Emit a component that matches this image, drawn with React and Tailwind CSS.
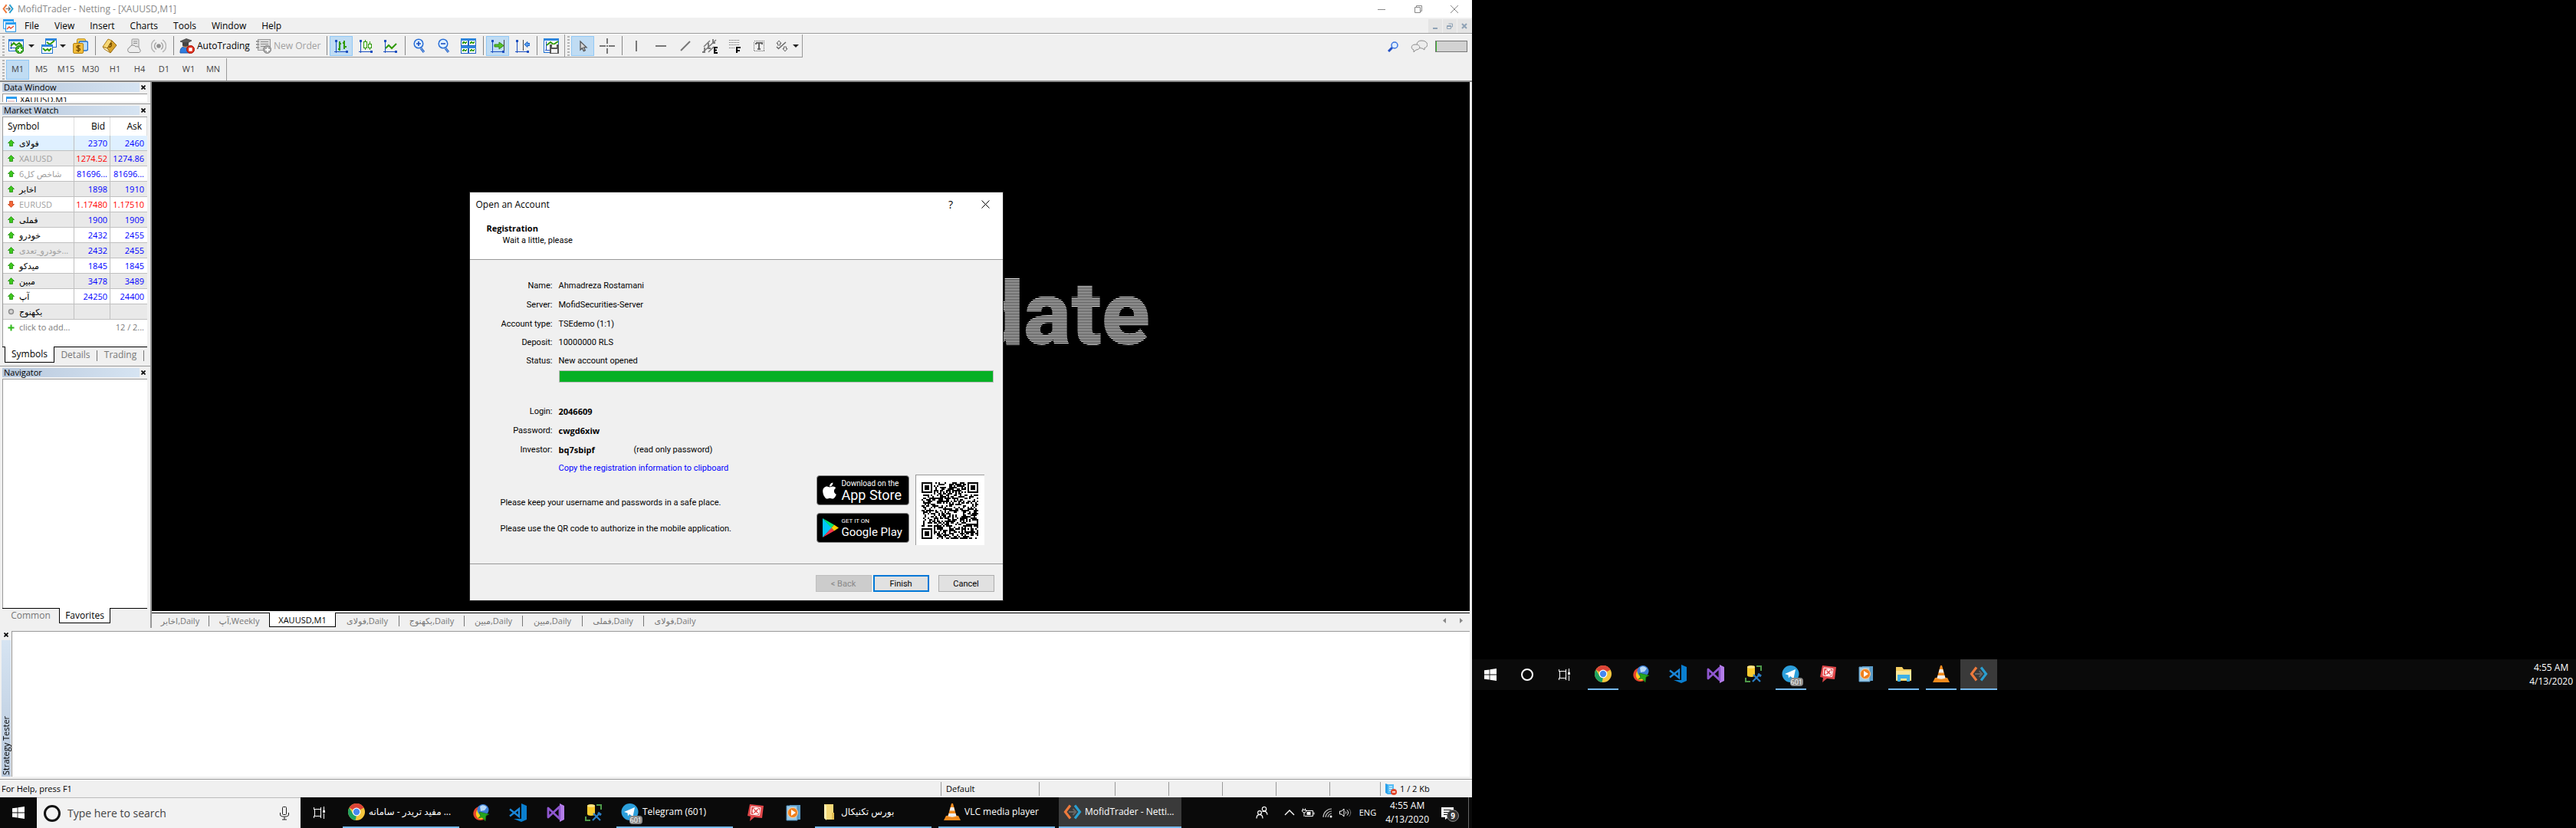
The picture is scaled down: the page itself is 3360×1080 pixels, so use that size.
import React from "react";
import { FaApple } from "react-icons/fa";

const UI = "font-['Open_Sans','DejaVu_Sans',sans-serif]";

/* ---------- toolbar icons (20 x 20) ---------- */
function Svg({ size = 20, box = 20, children, crisp = true }) {
  return (
    <svg width={size} height={size} viewBox={`0 0 ${box} ${box}`} fill="none" shapeRendering={crisp ? "crispEdges" : "auto"} className="shrink-0" aria-hidden="true">
      {children}
    </svg>
  );
}
const Axes = () => (
  <g>
    <path d="M3.5 2V19M1 17.5H19" stroke="#1c4fc0" />
    <path d="M2 2h3v3h-3zM16 16h3v3h-3z" fill="#1c4fc0" />
  </g>
);
const NewChart = () => (
  <Svg>
    <rect x="0.5" y="1" width="19" height="15" fill="#fff" stroke="#1c6fd0" />
    <path d="M1 1h19v3H1z" fill="#2f86dd" />
    <path d="M3.5 5v9M2 12.5h16" stroke="#1c4fc0" />
    <path d="M3 10l4-4 3 3 4-3 4 4" stroke="#2f9a00" strokeWidth="2" shapeRendering="auto" />
    <circle cx="14.5" cy="14.5" r="5.3" fill="#3fae2a" stroke="#1f7d12" shapeRendering="auto" />
    <path d="M14.5 11.5v6M11.5 14.5h6" stroke="#fff" strokeWidth="2" />
  </Svg>
);
const Windows = () => (
  <Svg>
    <rect x="5.5" y="0.5" width="14" height="11" fill="#fff" stroke="#1c6fd0" />
    <path d="M5 0h15v3H5z" fill="#2f86dd" />
    <path d="M7 5l4 3 6-5" stroke="#2f9a00" strokeWidth="2" shapeRendering="auto" />
    <rect x="0.5" y="8.5" width="14" height="11" fill="#fff" stroke="#1c6fd0" />
    <path d="M0 8h15v3H0z" fill="#2f86dd" />
    <path d="M2 13l3 3 3-2 2 2 3-3" stroke="#2f9a00" strokeWidth="2" shapeRendering="auto" />
  </Svg>
);
const Money = () => (
  <Svg crisp={false}>
    <rect x="5.5" y="0.8" width="11" height="9" rx="1.5" fill="#f5cf58" stroke="#b8860b" />
    <rect x="8" y="4" width="11.5" height="12" rx="2" fill="#bfe0fa" stroke="#1c6fd0" strokeWidth="1.4" />
    <rect x="0.6" y="6.5" width="13" height="13" rx="1.5" fill="#f2bd3c" stroke="#b07f12" />
    <path d="M9.5 10.2c-1-1-4.6-.9-4.6 1 0 2 4.6 1.2 4.6 3.2 0 2-3.8 2-5 .8M7.2 8.5v9.5" stroke="#7a4f00" strokeWidth="1.4" />
  </Svg>
);
const Book = () => (
  <Svg crisp={false}>
    <path d="M1 11L8 1l5 2-6 10z" fill="#f7d774" stroke="#a8791a" />
    <path d="M7 13L13 3l6 6-8 10z" fill="#d9a42c" stroke="#8f6310" />
    <path d="M1 11l6 2 4 6-8-5z" fill="#fff3c4" stroke="#a8791a" />
    <path d="M10 8l3-1.5M9 11c2 1 4-1 3-3" stroke="#6b4600" strokeWidth="1.4" />
  </Svg>
);
const Server = () => (
  <Svg crisp={false}>
    <rect x="7" y="1" width="9" height="12" rx="1" fill="#e4e4e4" stroke="#989898" />
    <path d="M9 4h5M9 6.5h5" stroke="#8d8d8d" />
    <path d="M4 18.5a3.4 3.4 0 010-6.5 4.5 4.5 0 018-1 3.5 3.5 0 015 3 2.5 2.5 0 01-.5 4.5z" fill="#ededed" stroke="#8e8e8e" />
  </Svg>
);
const Signal = () => (
  <Svg crisp={false}>
    <circle cx="10" cy="10" r="2.8" fill="#8f8f8f" />
    <path d="M7 5.5a5.3 5.3 0 000 9M13 5.5a5.3 5.3 0 010 9" stroke="#a0a0a0" strokeWidth="1.4" />
    <path d="M5 2.200a9 9 0 000 15.600M15 2.200a9 9 0 010 15.600" stroke="#b4b4b4" strokeWidth="1.4" />
  </Svg>
);
const AutoTrade = () => (
  <Svg crisp={false}>
    <path d="M1 19c0-6 2-8 6-8s7 2 7 8z" fill="#2f7de0" stroke="#1b57ad" />
    <circle cx="8" cy="8" r="4" fill="#c08a5a" />
    <path d="M1 4l8-3.5L16 3l-7 4z" fill="#5a5a5a" stroke="#333" strokeWidth=".7" />
    <path d="M4 5.5v4c2 1.5 6 1.5 8 0V5z" fill="#444" />
    <circle cx="14.5" cy="14.5" r="5" fill="#e0301e" stroke="#a81408" />
    <rect x="12.3" y="12.3" width="4.4" height="4.4" fill="#fff" />
  </Svg>
);
const NewOrder = () => (
  <Svg>
    <rect x="2" y="1" width="16" height="14" fill="#ddd" stroke="#999" />
    <path d="M6 4.5h10M6 7.5h10M6 10.5h8" stroke="#8c8c8c" />
    <path d="M0 3h4v2H0zM0 7h4v2H0zM0 11h4v2H0z" fill="#999" />
    <circle cx="14.5" cy="14.5" r="5" fill="#a8a8a8" stroke="#858585" shapeRendering="auto" />
    <path d="M14.5 11.5v6M11.5 14.5h6" stroke="#fff" strokeWidth="2" />
  </Svg>
);
const Bars = () => (
  <Svg>
    <Axes />
    <path d="M8 4v12M6 14h2M8 7h2M14 3v11M12 6h2M14 11h3" stroke="#2f9a00" strokeWidth="2" />
  </Svg>
);
const Candles = () => (
  <Svg>
    <Axes />
    <path d="M9.5 2v13M15.5 4v11" stroke="#2f9a00" />
    <rect x="7.5" y="4.5" width="4" height="8" fill="#eaffea" stroke="#2f9a00" />
    <rect x="13.5" y="7.5" width="4" height="5" fill="#eaffea" stroke="#2f9a00" />
  </Svg>
);
const LineChart = () => (
  <Svg>
    <Axes />
    <path d="M4 13l4-4 4 4 6-6" stroke="#2f9a00" strokeWidth="2" shapeRendering="auto" />
  </Svg>
);
const Zoomer = ({ plus }) => (
  <Svg crisp={false}>
    <path d="M12 13l4 5" stroke="#2a66c8" strokeWidth="3" />
    <path d="M12 13l4 5" stroke="#8db8ef" />
    <circle cx="9" cy="7" r="5.8" fill="#dff0ff" stroke="#2a6fd6" strokeWidth="1.5" />
    <path d={plus ? "M9 4v6M6 7h6" : "M6 7h6"} stroke="#1c4fc0" strokeWidth="1.6" />
  </Svg>
);
const Tile = () => (
  <Svg>
    {[[0, 0], [10, 0], [0, 10], [10, 10]].map(([x, y]) => (
      <g key={`${x}-${y}`}>
        <rect x={x + 0.5} y={y + 0.5} width="9" height="9" fill="#fff" stroke="#1c5fc4" />
        <path d={`M${x} ${y}h10v3h-10z`} fill="#2f86dd" />
        <path d={`M${x + 2} ${y + 7}l2-2 2 1 2-1`} stroke="#2f9a00" strokeWidth="1.5" />
      </g>
    ))}
  </Svg>
);
const Scroll = () => (
  <Svg>
    <Axes />
    <path d="M6 8h6V5l6 4.5-6 4.5v-3H6z" fill="#57c22a" stroke="#2f8a10" shapeRendering="auto" />
    <path d="M18.5 2v14" stroke="#444" />
  </Svg>
);
const Shift = () => (
  <Svg>
    <Axes />
    <path d="M11.5 2v14" stroke="#444" />
    <path d="M13 8l4-3.5v2h3v3h-3v2z" fill="#5aa2f0" stroke="#1c5fc4" shapeRendering="auto" />
  </Svg>
);
const SaveChart = () => (
  <Svg>
    <rect x="0.5" y="0.5" width="19" height="18" fill="#fff" stroke="#1c6fd0" />
    <path d="M0 0h20v3H0z" fill="#2f86dd" />
    <path d="M3.5 4v12M2 15.5h6" stroke="#1c4fc0" />
    <path d="M4 9l5-4 4 3 6-4" stroke="#2f9a00" strokeWidth="2" shapeRendering="auto" />
    <path d="M8 8h12v12H8z" fill="#555" />
    <path d="M11 8h6v4h-6zM10 14h8v5h-8z" fill="#f2f2f2" />
  </Svg>
);
const Cursor = () => (
  <Svg crisp={false}>
    <path d="M7 4v11l2.5-2.3 1.8 4 2-.9-1.8-3.9H15z" fill="#d9d9d9" stroke="#555" strokeWidth="1.3" />
  </Svg>
);
const Cross = () => (
  <Svg>
    <path d="M0 10h8M12 10h8M10 0v7M10 13v7" stroke="#777" strokeWidth="2" />
    <path d="M9 9h2v2H9z" fill="#777" />
  </Svg>
);
const VLine = () => <Svg><path d="M10 3v14" stroke="#777" strokeWidth="2" /></Svg>;
const HLine = () => <Svg><path d="M3 10h14" stroke="#777" strokeWidth="2" /></Svg>;
const Diag = () => <Svg crisp={false}><path d="M4 16L16 4" stroke="#777" strokeWidth="2" /></Svg>;
const Channel = () => (
  <Svg crisp={false}>
    <path d="M2 11l8-8M1 18L18 2M8 18l7-7" stroke="#777" strokeWidth="1.5" />
    <path d="M3 12v7M8 6v8M14 1v6M0 18h3M8 13h3M14 6h3" stroke="#777" strokeWidth="1.8" />
    <path d="M15 12h5M15 15.5h4M15 19h5M16 11.5v8" stroke="#000" strokeWidth="1.8" />
  </Svg>
);
const Fibo = () => (
  <Svg>
    <path d="M3 2.500h14M3 5.500h14M3 8.500h14M3 12.500h8" stroke="#666" strokeDasharray="1 1" />
    <path d="M12 12h6M12 15.5h5M13 11v8" stroke="#000" strokeWidth="2" />
  </Svg>
);
const TextIcon = () => (
  <Svg>
    <rect x="3.5" y="3.5" width="13" height="13" stroke="#666" strokeDasharray="1 1" />
    <path d="M6 6h8v2M6 6v2M10 6v8M8 14h4" stroke="#666" strokeWidth="2" />
  </Svg>
);
const Shapes = () => (
  <Svg crisp={false}>
    <path d="M6 3l3 3.5H7.5V9h-3V6.5H3z M14 17l-3-3.5h1.5V11h3v2.5H17z" fill="#eee" stroke="#666" />
    <path d="M6 13l9-8M3 11l3 3" stroke="#666" strokeWidth="1.5" />
  </Svg>
);
const Caret = () => (
  <svg width="8" height="4" viewBox="0 0 8 4" className="shrink-0" aria-hidden="true"><path d="M0 0h8L4 4z" fill="#222" /></svg>
);

/* ---------- application icons ---------- */
const Mofid = ({ size = 24 }) => (
  <Svg size={size} box={24} crisp={false}>
    <path d="M9 3.5L2.5 12 9 20.5" stroke="#ee7a3c" strokeWidth="3.2" />
    <path d="M15 3.5l6.5 8.5L15 20.5" stroke="#2a9fd0" strokeWidth="3.2" />
    <path d="M7 12h9M12.5 8l4 4-4 4" stroke="#666" strokeWidth="1.8" />
  </Svg>
);
const Chrome = () => (
  <Svg size={24} box={24} crisp={false}>
    <circle cx="12" cy="12" r="11" fill="#f4c63d" />
    <path d="M12 12L2.5 6.5A11 11 0 0121.5 6.5z" fill="#dc4437" />
    <path d="M12 1a11 11 0 019.500 6H12z" fill="#dc4437" />
    <path d="M2.5 6.5L7.700 15 12 17l-1.5 5.9A11 11 0 012.5 6.5z" fill="#1da261" />
    <circle cx="12" cy="12" r="5.4" fill="#fff" />
    <circle cx="12" cy="12" r="4.2" fill="#4688f1" />
  </Svg>
);
const Idm = () => (
  <Svg size={24} box={24} crisp={false}>
    <path d="M9 4C1 7 0 17 7 21c4 2 9 1 12-2-7 1-12-4-9-11z" fill="#e8452c" />
    <path d="M10 6c-6 4-5 12 0 14 3 1 6 0 8-2-6 0-9-4-8-10z" fill="#f8d01f" />
    <circle cx="15" cy="8.5" r="7.5" fill="#3b7fd6" />
    <path d="M11 4c3-3 7-2 9 1l-3 4-5 1z" fill="#b7d9f7" />
    <path d="M10 11l13 3-4 2-1 7-4-5-5 1 3-3z" fill="#26a51e" stroke="#126b0c" strokeWidth=".6" />
  </Svg>
);
const VsCode = () => (
  <Svg size={24} box={24} crisp={false}>
    <path d="M16 0l7 3v18l-7 3-10-4h10z" fill="#0a7fd0" />
    <path d="M1 7.5L13 17V7L1 16.5" stroke="#1a86d8" strokeWidth="2.4" />
  </Svg>
);
const VisualStudio = () => (
  <Svg size={24} box={24} crisp={false}>
    <path d="M17 0l6 3v18l-6 3z" fill="#b37de8" />
    <path d="M2 6v12L17 4v16L2 6z" stroke="#8f57cf" strokeWidth="2.8" strokeLinejoin="round" />
  </Svg>
);
const Ssms = () => (
  <Svg size={24} box={24} crisp={false}>
    <path d="M16 2h6v6M8 22H2v-5" stroke="#4f9a4a" strokeWidth="2" />
    <path d="M4 3c0-2.500 10-2.500 10 0v11c0 2.500-10 2.500-10 0z" fill="#f8cb2e" />
    <ellipse cx="9" cy="3" rx="5" ry="1.8" fill="#fde68a" />
    <path d="M11 22l9-9M12 13l9 9" stroke="#2a7fc8" strokeWidth="2.2" />
    <path d="M18 12l4 3" stroke="#2a7fc8" strokeWidth="3" />
  </Svg>
);
const Telegram = () => (
  <span className="relative block h-6 w-6">
    <Svg size={24} box={24} crisp={false}>
      <circle cx="11.5" cy="12" r="11" fill="#2c9fdb" />
      <path d="M4 12l14-6-2.5 12-4.5-3-2 2.500-.5-4z" fill="#fff" />
    </Svg>
    <span className="absolute -right-1 -bottom-1 rounded-sm bg-[#8a8a8a] px-px text-[9px] leading-[11px] text-white">601</span>
  </span>
);
const RedApp = () => (
  <Svg size={24} box={24} crisp={false}>
    <path d="M4 1l18 2-2 16-10-1-6 5 1-6-4-1z" fill="#e1474a" />
    <path d="M6 4l12 1.500-1.500 10L5 14z" stroke="#fff" />
    <circle cx="12" cy="10" r="4.6" fill="#fff" />
    <path d="M9.5 7.5l5 5M14.5 7.5l-5 5" stroke="#e1474a" strokeWidth="1.6" />
  </Svg>
);
const Wmp = () => (
  <Svg size={24} box={24} crisp={false}>
    <path d="M7 2h14v19H7z" fill="#5b9cc8" />
    <path d="M3 3h14v19H3z" fill="#9ccbe8" stroke="#4f8fbd" />
    <circle cx="11" cy="12" r="6.5" fill="#f0801e" stroke="#fbd0a0" />
    <path d="M9 8l6 4-6 4z" fill="#fff" />
  </Svg>
);
const Folder = () => (
  <Svg size={24} box={24} crisp={false}>
    <path d="M6 2h12v20H8l-2-2z" fill="#f5d978" />
    <path d="M6 2l3 2v19l-3-3z" fill="#fff0b5" />
    <path d="M16 13h3v9h-3z" fill="#e2bd52" />
  </Svg>
);
const Explorer = () => (
  <Svg size={24} box={24} crisp={false}>
    <path d="M2 3h8l2 3h10v15H2z" fill="#f6cf62" />
    <path d="M2 8h20v12H2z" fill="#fde79a" />
    <path d="M4 22v-9h16v9h-4v-4H8v4z" fill="#3fb1e6" />
  </Svg>
);
const Vlc = () => (
  <Svg size={24} box={24} crisp={false}>
    <path d="M4 17h16l3 6H1z" fill="#f08a1d" />
    <path d="M11 1h2l5 18c-2 2-10 2-12 0z" fill="#f28b1e" />
    <path d="M9.8 6h4.4l1.200 4.500H8.600zM7.500 14h9l1 3.500c-3 1.500-8 1.500-11 0z" fill="#eee" />
  </Svg>
);
const WinLogo = () => (
  <svg width="16" height="16" viewBox="0 0 16 16" fill="#fff" aria-hidden="true">
    <path d="M0 2.300l6.600-.9v6.200H0zM7.400 1.300L16 0v7.600H7.400zM0 8.400h6.600v6.200L0 13.700zM7.400 8.400H16V16l-8.600-1.200z" />
  </svg>
);
const TaskView = () => (
  <svg width="17" height="16" viewBox="0 0 17 16" fill="none" stroke="#fff" shapeRendering="crispEdges" aria-hidden="true">
    <path d="M1 3.500h10M1 12.500h10M1.500 1v2M10.500 1v2M1.500 13v2M10.500 13v2M2.500 3v9M10.500 3v9M14.500 0v5M14.500 9v7" />
    <path d="M13 5h3v3h-3z" fill="#fff" stroke="none" />
  </svg>
);

/* ---------- shared pieces ---------- */
function Tool({ label, on, disabled, children }) {
  return (
    <button type="button" aria-label={label} disabled={disabled}
      className={on ? "flex h-[26px] w-[30px] shrink-0 items-center justify-center border border-[#90c8f6] bg-[#c0dcf3]" : "flex h-[26px] w-[30px] shrink-0 items-center justify-center"}>
      {children}
    </button>
  );
}
const Sep = () => <span className="mr-px ml-0.5 h-[25px] w-px shrink-0 bg-[#888]" />;
const Grip = () => <span className="h-[26px] w-[3px] shrink-0 bg-[repeating-linear-gradient(180deg,#b4b4b4_0,#b4b4b4_2px,transparent_2px,transparent_4px)]" />;

const CloseX = () => (
  <svg width="6" height="6" viewBox="0 0 6 6" aria-hidden="true"><path d="M.5.5l5 5M5.500.5l-5 5" stroke="#000" strokeWidth="1.6" /></svg>
);
function PanelHeader({ title }) {
  return (
    <div className="flex h-3 items-center">
      <h2 className="h-full flex-1 bg-linear-to-r from-[#b8c8dc] to-[#d6e4f2] pl-0.5 text-[11px] leading-[11px] text-black">{title}</h2>
      <button type="button" aria-label={`Close ${title}`} className="flex w-2.5 justify-center">
        <CloseX />
      </button>
    </div>
  );
}

/* ---------- data ---------- */
const symbols = [
  ["up", "فولای", "2370", "2460", "b", "b", false],
  ["up", "XAUUSD", "1274.52", "1274.86", "r", "b", true],
  ["up", "شاخص کل6", "81696...", "81696...", "b", "b", true],
  ["up", "اخابر", "1898", "1910", "b", "b", false],
  ["down", "EURUSD", "1.17480", "1.17510", "r", "r", true],
  ["up", "فملی", "1900", "1909", "b", "b", false],
  ["up", "خودرو", "2432", "2455", "b", "b", false],
  ["up", "خودرو_تعدی...", "2432", "2455", "b", "b", true],
  ["up", "میدکو", "1845", "1845", "b", "b", false],
  ["up", "مبین", "3478", "3489", "b", "b", false],
  ["up", "آپ", "24250", "24400", "b", "b", false],
  ["none", "بکهنوج", "", "", "b", "b", false],
];

function Mark({ kind }) {
  return (
    <svg width="9" height="9" viewBox="0 0 9 9" className="shrink-0" aria-hidden="true">
      {kind === "up" && <path d="M4.500.5l4 4H6.500V8.500h-4V4.500H.5z" fill="#3ec81e" stroke="#1f8c0c" strokeWidth=".8" />}
      {kind === "down" && <path d="M4.500 8.500l4-4H6.500V.5h-4v4H.5z" fill="#f4683a" stroke="#c23a12" strokeWidth=".8" />}
      {kind === "none" && <circle cx="4.5" cy="4.5" r="3" fill="#d5d5d5" stroke="#8a8a8a" strokeWidth="1.4" />}
      {kind === "add" && <path d="M4.500.5v8M.5 4.500h8" stroke="#2fb81a" strokeWidth="2" />}
    </svg>
  );
}

function MarketWatch() {
  return (
    <section className="flex h-[342px] shrink-0 flex-col border-b border-[#999] pt-0.5 pr-1 pl-[3px]">
      <PanelHeader title="Market Watch" />
      <div className="mt-0.5 flex flex-1 flex-col border-t border-l border-[#999] bg-white">
        <table className="w-full table-fixed border-separate border-spacing-0 text-[11px] leading-4">
          <colgroup><col /><col className="w-[47px]" /><col className="w-12" /></colgroup>
          <thead>
            <tr className="text-[12px] text-black">
              <th className="h-6 border-r border-[#ddd] pl-1.5 text-left font-normal">Symbol</th>
              <th className="border-r border-[#ddd] pr-1.5 text-right font-normal">Bid</th>
              <th className="border-r border-[#ddd] pr-1.5 text-right font-normal">Ask</th>
            </tr>
          </thead>
          <tbody>
            {symbols.map(([kind, name, bid, ask, c1, c2, dim], i) => (
              <tr key={i} className={i === 0 ? "bg-[#dff0ff]" : i % 2 ? "bg-[#e9e9e9]" : "bg-white"}>
                <td className="h-5 border-r border-b border-[#c0c0c0] pl-1.5">
                  <span className={dim ? "flex items-center gap-1.5 whitespace-nowrap text-[#a0a0a0]" : "flex items-center gap-1.5 whitespace-nowrap text-black"}>
                    <Mark kind={kind} />
                    {name}
                  </span>
                </td>
                <td className={c1 === "r" ? "border-r border-b border-[#c0c0c0] pr-[3px] text-right text-[#f00]" : "border-r border-b border-[#c0c0c0] pr-[3px] text-right text-[#00f]"}>{bid}</td>
                <td className={c2 === "r" ? "border-b border-[#c0c0c0] pr-1 text-right text-[#f00]" : "border-b border-[#c0c0c0] pr-1 text-right text-[#00f]"}>{ask}</td>
              </tr>
            ))}
            <tr className="text-[#7c7c7c]">
              <td colSpan={2} className="h-5 pl-1.5"><span className="flex items-center gap-1.5"><Mark kind="add" />click to add...</span></td>
              <td className="pr-1 text-right whitespace-nowrap">12 / 2...</td>
            </tr>
          </tbody>
        </table>
      </div>
      <div className="flex h-[25px] items-start border-t border-black pl-[3px] text-[12px]">
        <button type="button" className="-mt-px h-[21px] w-[65px] border-x border-b border-black bg-white leading-[18px] text-black">Symbols</button>
        <button type="button" className="w-[55px] leading-5 text-[#777]">Details</button>
        <span className="mt-1 h-3.5 w-px bg-[#777]" />
        <button type="button" className="w-[60px] leading-5 text-[#777]">Trading</button>
        <span className="mt-1 h-3.5 w-px bg-[#777]" />
      </div>
    </section>
  );
}

function LeftPanels() {
  return (
    <aside className="flex w-[198px] shrink-0 flex-col border-r-2 border-[#999] bg-[#f0f0f0]">
      <section className="flex h-[29px] shrink-0 flex-col border-b border-[#999] pt-px pr-1 pl-[3px]">
        <PanelHeader title="Data Window" />
        <div className="mt-0.5 flex h-[11px] items-end gap-1 overflow-hidden border-t border-l border-[#999] bg-white pl-1">
          <svg width="14" height="7" viewBox="0 0 14 7" aria-hidden="true"><path d="M0 0h14v3H0z" fill="#2a9df0" /><path d="M.5 2v5M13.500 2v5" stroke="#2a7fd0" /><path d="M2 6h9" stroke="#d8a0a0" /></svg>
          <span className="flex h-[6px] items-center overflow-hidden text-[11px] text-black">XAUUSD,M1</span>
        </div>
      </section>
      <MarketWatch />
      <section className="flex flex-1 flex-col pt-0.5 pr-1 pl-[3px]">
        <PanelHeader title="Navigator" />
        <div className="mt-0.5 flex-1 border-t border-l border-[#999] bg-white" />
        <div className="flex h-[26px] items-start border-t border-black text-[12px]">
          <button type="button" className="w-[74px] leading-[18px] text-[#777]">Common</button>
          <button type="button" className="-mt-px h-5 w-[67px] border-x border-b border-black bg-white leading-[18px] text-black">Favorites</button>
        </div>
      </section>
    </aside>
  );
}

const chartTabs = [
  ["اخابر,Daily", "w-[74px]", false, true],
  ["آپ,Weekly", "w-[78px]", false, false],
  ["XAUUSD,M1", "w-[87px]", true, false],
  ["فولای,Daily", "w-[82px]", false, true],
  ["بکهنوج,Daily", "w-[84px]", false, true],
  ["مبین,Daily", "w-[75px]", false, true],
  ["مبین,Daily", "w-[77px]", false, true],
  ["فملی,Daily", "w-[79px]", false, true],
  ["فولای,Daily", "w-[81px]", false, false],
];

function ChartArea() {
  return (
    <main className="flex min-w-0 flex-1 flex-col pr-[3px]">
      <div className="relative flex-1 overflow-hidden bg-black">
        <p className="absolute top-[232px] right-[417px] bg-[repeating-linear-gradient(180deg,#fff_0,#fff_1px,#000_1px,#000_2px)] bg-clip-text font-['Roboto',sans-serif] text-[116px] leading-[140px] font-black text-transparent">date</p>
      </div>
      <nav className="mt-0.5 flex h-5 items-start border-t border-black bg-[#f0f0f0] text-[11px]">
        {chartTabs.map(([name, w, on, bar], i) => (
          <React.Fragment key={i}>
            <button type="button" className={`${w} ${on ? "-mt-px h-[19px] border-x border-b border-black bg-white leading-[17px] text-black" : "leading-5 text-[#777]"}`}>{name}</button>
            {bar && <span className="mt-[3px] h-3.5 w-px bg-[#777]" />}
          </React.Fragment>
        ))}
        <span className="flex-1" />
        <button type="button" aria-label="Previous tabs" className="flex h-[18px] w-[22px] items-center justify-center"><svg width="4" height="7" viewBox="0 0 4 7" aria-hidden="true"><path d="M4 0v7L0 3.500z" fill="#888" /></svg></button>
        <button type="button" aria-label="Next tabs" className="flex h-[18px] w-[22px] items-center justify-center"><svg width="4" height="7" viewBox="0 0 4 7" aria-hidden="true"><path d="M0 0v7l4-3.500z" fill="#888" /></svg></button>
      </nav>
    </main>
  );
}

/* ---------- QR code ---------- */
const N = 37;
function qrPath() {
  let seed = 2046609;
  const rnd = () => {
    seed = (seed * 1103515245 + 12345) % 2147483648;
    return seed / 2147483648;
  };
  const finder = (x, y) => {
    const m = Math.max(Math.abs(x - 3), Math.abs(y - 3));
    return m === 3 || m <= 1;
  };
  let d = "";
  for (let y = 0; y < N; y++)
    for (let x = 0; x < N; x++) {
      let on = rnd() > 0.5;
      if (x < 8 && y < 8) on = x < 7 && y < 7 && finder(x, y);
      else if (x > N - 9 && y < 8) on = x > N - 8 && y < 7 && finder(x - N + 7, y);
      else if (x < 8 && y > N - 9) on = x < 7 && y > N - 8 && finder(x, y - N + 7);
      else if (x > 27 && x < 33 && y > 27 && y < 33) {
        const m = Math.max(Math.abs(x - 30), Math.abs(y - 30));
        on = m !== 1;
      } else if (x === 6 || y === 6) on = (x + y) % 2 === 0;
      if (on) d += `M${x} ${y}h1v1h-1z`;
    }
  return d;
}
const QR = qrPath();

/* ---------- dialog ---------- */
function Row({ label, children, className = "h-[25px]" }) {
  return (
    <div className={`flex items-center ${className}`}>
      <dt className="w-[108px] text-right">{label}</dt>
      <dd className="flex items-center pl-2">{children}</dd>
    </div>
  );
}
const Strong = ({ children, className = "" }) => <b className={`font-['Open_Sans',sans-serif] ${className}`}>{children}</b>;
function Dialog() {
  return (
    <section role="dialog" aria-labelledby="dlg" className="flex w-[697px] flex-col border border-[#222] bg-[#f0f0f0] font-['Roboto','DejaVu_Sans',sans-serif] text-[11px] leading-[15px] text-black">
      <header className="h-[88px] border-b border-[#999] bg-white">
        <div className="flex h-[30px] items-center pl-2 font-['Open_Sans',sans-serif] text-[12px]">
          <h1 id="dlg" className="flex-1">Open an Account</h1>
          <button type="button" aria-label="Help" className="w-[45px] text-[14px]">?</button>
          <button type="button" aria-label="Close" className="flex w-[45px] justify-center">
            <svg width="11" height="11" viewBox="0 0 11 11" aria-hidden="true"><path d="M.5.5l10 10M10.500.5l-10 10" stroke="#000" /></svg>
          </button>
        </div>
        <p className="mt-[9px] pl-[22px]"><Strong>Registration</Strong></p>
        <p className="pl-[43px]">Wait a little, please</p>
      </header>
      <div className="h-[397px] border-b border-[#999] pt-[21px]">
        <dl>
          <Row label="Name:">Ahmadreza Rostamani</Row>
          <Row label="Server:">MofidSecurities-Server</Row>
          <Row label="Account type:" className="h-6">TSEdemo (1:1)</Row>
          <Row label="Deposit:" className="h-6">10000000 RLS</Row>
          <Row label="Status:">New account opened</Row>
        </dl>
        <div role="progressbar" aria-label="Registration progress" aria-valuenow={100} className="mr-3 ml-[116px] h-4 border border-[#bcbcbc] bg-[#06b025]" />
        <dl className="mt-[25px]">
          <Row label="Login:"><Strong>2046609</Strong></Row>
          <Row label="Password:"><Strong>cwgd6xiw</Strong></Row>
          <Row label="Investor:" className="h-6"><Strong className="w-[98px]">bq7sbipf</Strong>(read only password)</Row>
        </dl>
        <div className="flex pl-10">
          <div className="flex-1">
            <a href="#copy" className="mt-[5px] block pl-[76px] text-[#00f]">Copy the registration information to clipboard</a>
            <p className="mt-[30px]">Please keep your username and passwords in a safe place.</p>
            <p className="mt-[19px]">Please use the QR code to authorize in the mobile application.</p>
          </div>
          <div className="mt-[22px] mr-2 flex flex-col gap-[10px]">
            <a href="#appstore" className="flex h-[39px] w-[121px] items-center gap-1.5 rounded border border-[#888] bg-black pl-1.5 whitespace-nowrap text-white">
              <FaApple className="h-6 w-5" />
              <span className="flex flex-col text-[10px] leading-3">Download on the<span className="text-[18px] leading-[18px]">App Store</span></span>
            </a>
            <a href="#googleplay" className="flex h-[39px] w-[121px] items-center gap-1 rounded border border-[#888] bg-black pl-1.5 whitespace-nowrap text-white">
              <svg width="22" height="25" viewBox="0 0 22 25" aria-hidden="true">
                <path d="M1 0l12 12.500L1 25z" fill="#00c8f8" />
                <path d="M1 0l15 8.500-3.500 4z" fill="#00e676" />
                <path d="M1 25l15-8.500-3.500-4z" fill="#f2364b" />
                <path d="M12.500 12.500L16 8.500l6 4-6 4z" fill="#ffcf00" />
              </svg>
              <span className="flex flex-col text-[8px] leading-[10px]">GET IT ON<span className="text-[15px] leading-[18px]">Google Play</span></span>
            </a>
          </div>
          <div className="mt-[21px] mr-6 flex h-[92px] w-[90px] items-center justify-center border-t border-l border-[#999] bg-white">
            <svg width="74" height="74" viewBox="0 0 37 37" shapeRendering="crispEdges" role="img" aria-label="QR code"><path d={QR} fill="#000" /></svg>
          </div>
        </div>
      </div>
      <footer className="flex h-[47px] items-start justify-end pt-[14px] pr-[11px]">
        <button type="button" disabled className="h-[22px] w-[73px] border border-[#bfbfbf] bg-[#ccc] text-[#888]">&lt; Back</button>
        <button type="button" className="ml-0.5 h-[22px] w-[73px] border-2 border-[#0078d7] bg-[#e1e1e1]">Finish</button>
        <button type="button" className="ml-3 h-[22px] w-[73px] border border-[#adadad] bg-[#e1e1e1]">Cancel</button>
      </footer>
    </section>
  );
}

/* ---------- main window bars ---------- */
function TopBars() {
  return (
    <header className="shrink-0">
      <div className="flex h-[23px] items-center gap-1 bg-white pl-[3px] text-[12px] text-[#8a8a8a]">
        <Mofid size={15} />
        <h1 className="flex-1 pl-px">MofidTrader - Netting - [XAUUSD,M1]</h1>
        <button type="button" aria-label="Minimize" className="flex w-[46px] justify-center"><svg width="10" height="10" viewBox="0 0 10 10" aria-hidden="true"><path d="M0 5.500h10" stroke="#888" /></svg></button>
        <button type="button" aria-label="Restore" className="flex w-[41px] justify-center"><svg width="10" height="10" viewBox="0 0 10 10" fill="none" stroke="#888" aria-hidden="true"><path d="M.5 2.500h7v7h-7zM2.500 2.500v-2h7v7h-2" /></svg></button>
        <button type="button" aria-label="Close" className="flex w-[46px] justify-center"><svg width="10" height="10" viewBox="0 0 10 10" stroke="#888" aria-hidden="true"><path d="M0 0l10 10M10 0L0 10" /></svg></button>
      </div>
      <div className="flex h-[22px] items-center border-b border-white bg-[#f0f0f0] pl-1 text-[12px] text-black shadow-[inset_0_-1px_0_#999]">
        <svg width="17" height="17" viewBox="0 0 17 17" fill="none" className="shrink-0" aria-hidden="true">
          <path d="M.5.5h13v12H.5z" fill="#fff" stroke="#2a9df0" /><path d="M0 0h14v3H0z" fill="#2a9df0" />
          <path d="M3.500 4.500h13v12h-13z" fill="#fff" stroke="#1c8fe0" /><path d="M3 4h14v3H3z" fill="#2a9df0" />
          <path d="M5 13l3-3 2 2 4-3" stroke="#e8502c" strokeWidth="1.5" />
        </svg>
        <nav className="flex flex-1 items-center gap-5 pl-[11px]">
          {["File", "View", "Insert", "Charts", "Tools", "Window", "Help"].map((m) => <button type="button" key={m}>{m}</button>)}
        </nav>
        <div className="flex gap-px pr-px">
          <button type="button" aria-label="Minimize chart" className="flex h-[18px] w-[18px] items-center justify-center bg-[#e4e4e4]"><svg width="8" height="8" viewBox="0 0 8 8" aria-hidden="true"><path d="M1 6h6v2H1z" fill="#8fa2b5" /></svg></button>
          <button type="button" aria-label="Restore chart" className="flex h-[18px] w-[18px] items-center justify-center bg-[#e4e4e4]"><svg width="8" height="8" viewBox="0 0 8 8" fill="none" stroke="#8fa2b5" aria-hidden="true"><path d="M.5 3.500h5v4h-5zM2.500 1h5v4h-2M.5 4.500h5" /></svg></button>
          <button type="button" aria-label="Close chart" className="flex h-[18px] w-[18px] items-center justify-center bg-[#e4e4e4]"><svg width="8" height="8" viewBox="0 0 8 8" stroke="#8fa2b5" strokeWidth="2" aria-hidden="true"><path d="M1 1l6 6M7 1L1 7" /></svg></button>
        </div>
      </div>
      <div className="flex h-[31px] bg-[#f0f0f0] text-[12px]">
        <div className="flex h-[30px] items-center gap-0.5 border-r border-b border-[#999] pr-0.5 pl-[3px]">
          <Grip />
          <button type="button" aria-label="New chart" className="flex h-[26px] items-center gap-[6px] pl-[3px]"><NewChart /><Caret /></button>
          <button type="button" aria-label="Profiles" className="flex h-[26px] items-center gap-1 pl-[7px]"><Windows /><Caret /></button>
          <button type="button" aria-label="Symbols" className="mr-[5px] ml-[7px] flex h-[26px] items-center"><Money /></button>
          <Sep />
          <Tool label="Book"><Book /></Tool>
          <Tool label="Server" disabled><Server /></Tool>
          <Tool label="Signals" disabled><Signal /></Tool>
          <Sep />
          <button type="button" className="ml-1 flex h-[26px] w-[98px] items-center gap-[3px] whitespace-nowrap text-black"><AutoTrade />AutoTrading</button>
          <button type="button" disabled className="flex h-[26px] w-[88px] items-center gap-[3px] whitespace-nowrap text-[#a0a0a0]"><NewOrder />New Order</button>
          <Sep />
          <Tool label="Bar chart" on><Bars /></Tool>
          <Tool label="Candlesticks"><Candles /></Tool>
          <Tool label="Line chart"><LineChart /></Tool>
          <Sep />
          <Tool label="Zoom in"><Zoomer plus /></Tool>
          <Tool label="Zoom out"><Zoomer /></Tool>
          <Tool label="Tile windows"><Tile /></Tool>
          <Sep />
          <Tool label="Auto scroll" on><Scroll /></Tool>
          <Tool label="Chart shift"><Shift /></Tool>
          <Sep />
          <Tool label="Save chart"><SaveChart /></Tool>
        </div>
        <div className="flex h-[30px] items-center gap-0.5 border-r border-b border-[#999] pr-1 pl-[3px]">
          <Grip />
          <Tool label="Cursor" on><Cursor /></Tool>
          <Tool label="Crosshair"><Cross /></Tool>
          <Sep />
          <Tool label="Vertical line"><VLine /></Tool>
          <Tool label="Horizontal line"><HLine /></Tool>
          <Tool label="Trend line"><Diag /></Tool>
          <Tool label="Equidistant channel"><Channel /></Tool>
          <Tool label="Fibonacci"><Fibo /></Tool>
          <Tool label="Text"><TextIcon /></Tool>
          <button type="button" aria-label="Objects" className="flex h-[26px] items-center gap-1 pl-[3px]"><Shapes /><Caret /></button>
        </div>
        <div className="flex flex-1 items-center justify-end pr-1.5">
          <button type="button" aria-label="Search"><svg width="14" height="14" viewBox="0 0 14 14" fill="none" aria-hidden="true"><path d="M1 13l5-5" stroke="#2350c4" strokeWidth="3" /><circle cx="9" cy="5" r="4" fill="#dfeeff" stroke="#3a74e0" strokeWidth="1.5" /></svg></button>
          <button type="button" aria-label="Chat" className="mr-2.5 ml-4"><svg width="22" height="17" viewBox="0 0 22 17" fill="#ececec" stroke="#8c8c8c" aria-hidden="true"><path d="M14 1c10 0 9 9 4 9.500V13l-3-2c-9 0-9-10-1-10z" /><path d="M6 6c8 0 7 7 1 7l-3 3v-3C0 12 0 6 6 6z" /></svg></button>
          <span className="h-[15px] w-[42px] border border-[#777] bg-[#d2d2d2] shadow-[inset_1px_0_0_#35b52a]" />
        </div>
      </div>
      <div className="flex h-[31px] border-b-2 border-[#888] bg-[#f0f0f0]">
        <div className="flex items-center border-r border-[#999] pr-px pl-[3px] text-[11px] text-[#444]">
          <Grip />
          {["M1", "M5", "M15", "M30", "H1", "H4", "D1", "W1", "MN"].map((t, i) => (
            <button type="button" key={t} className={i === 0 ? "ml-0.5 h-[26px] w-[30px] border border-[#90c8f6] bg-[#c0dcf3]" : "h-[26px] w-8"}>{t}</button>
          ))}
        </div>
      </div>
    </header>
  );
}

function StatusBar() {
  return (
    <div className="flex h-[23px] shrink-0 items-center border-t border-white bg-[#f0f0f0] text-[11px] text-black">
      <span className="flex-1 pl-0.5">For Help, press F1</span>
      <span className="h-[18px] w-32 border-l border-[#999] pl-1.5 leading-[18px]">Default</span>
      <span className="h-[18px] w-[99px] border-l border-[#999]" />
      {[0, 1, 2, 3].map((k) => <span key={k} className="h-[18px] w-[70px] border-l border-[#999]" />)}
      <span className="h-[18px] w-[66px] border-l border-[#999]" />
      <span className="flex h-[18px] w-[120px] items-center gap-1 border-l border-[#999] pl-[5px]">
        <svg width="16" height="16" viewBox="0 0 16 16" aria-hidden="true"><path d="M1 1l3 1h8v13H4l-3-2z" fill="#2aa0ea" /><path d="M4 2h8v12H4z" fill="#56bdf5" /><path d="M6 5h4M6 7.500h4M6 10h3" stroke="#fff" /><circle cx="12" cy="12" r="4" fill="#e2452a" /><path d="M10 12h4" stroke="#fff" strokeWidth="1.5" /></svg>
        1 / 2 Kb
      </span>
    </div>
  );
}

/* ---------- task bars ---------- */
function Task({ label, text, icon, w = "w-[152px]", active, ml = "" }) {
  return (
    <button type="button" aria-label={label} className={`flex h-10 shrink-0 items-center gap-1 overflow-hidden border-b-2 border-[#76b9ed] pl-1.5 text-[12px] whitespace-nowrap text-white ${w} ${ml} ${active ? "bg-[#3a3a3a]" : ""}`}>
      <span className="shrink-0">{icon}</span>
      {text}
    </button>
  );
}
const Pin = ({ label, children, w = "w-[49px]" }) => (
  <button type="button" aria-label={label} className={`flex h-10 shrink-0 items-center justify-center ${w}`}>{children}</button>
);
function Clock() {
  return (
    <div className="text-center text-[12px] leading-[18px] text-white">
      <div>4:55 AM</div>
      <div>4/13/2020</div>
    </div>
  );
}
function Taskbar() {
  return (
    <footer className="flex h-10 shrink-0 items-center bg-[#0a0a0a]">
      <Pin label="Start" w="w-12"><WinLogo /></Pin>
      <label className="flex h-10 w-[344px] items-center border-t border-[#bbb] bg-[#f2f2f2] pl-[9px]">
        <span className="h-[22px] w-[22px] shrink-0 rounded-full border-[3px] border-[#111]" />
        <input aria-label="Search" placeholder="Type here to search" className="min-w-0 flex-1 bg-transparent pl-[9px] text-[14px] text-black outline-none placeholder:text-[#444]" />
        <svg width="12" height="18" viewBox="0 0 12 18" fill="none" stroke="#222" className="mr-[15px] shrink-0" aria-hidden="true"><rect x="3.5" y=".5" width="5" height="10" rx="1" /><path d="M.5 8v3c0 3 11 3 11 0V8M6 13.500V17M3 17h6" /></svg>
      </label>
      <Pin label="Task view" w="w-12"><TaskView /></Pin>
      <Task label="Chrome" ml="ml-[7px]" icon={<Chrome />} text="مفید تریدر - سامانه ..." />
      <span className="flex pl-[3px]">
        <Pin label="Download manager"><Idm /></Pin>
        <Pin label="VS Code"><VsCode /></Pin>
        <Pin label="Visual Studio"><VisualStudio /></Pin>
        <Pin label="SQL tools"><Ssms /></Pin>
      </span>
      <Task label="Telegram" ml="ml-[6px]" icon={<Telegram />} text="Telegram (601)" />
      <span className="flex pl-[5px]">
        <Pin label="Remote app"><RedApp /></Pin>
        <Pin label="Media Player"><Wmp /></Pin>
      </span>
      <Task label="Folder" ml="ml-1" icon={<Folder />} text="بورس تکنیکال" />
      <Task label="VLC" ml="ml-[9px]" icon={<Vlc />} text="VLC media player" />
      <Task label="MofidTrader" ml="ml-[5px]" w="w-40" active icon={<Mofid />} text="MofidTrader - Netti..." />
      <div className="flex flex-1 items-center justify-end text-white">
        <svg width="16" height="16" viewBox="0 0 16 16" fill="none" stroke="#fff" strokeWidth="1.2" className="mr-[21px]" aria-hidden="true"><circle cx="5" cy="8" r="2.4" /><path d="M1 15.500c0-6.500 8-6.500 8 0" /><circle cx="11" cy="3.2" r="2.7" /><path d="M8.500 6.800c3-1.800 6.500 0 6.500 4" /></svg>
        <svg width="14" height="8" viewBox="0 0 14 8" fill="none" stroke="#fff" strokeWidth="1.4" className="mr-[9px]" aria-hidden="true"><path d="M1 7l6-6 6 6" /></svg>
        <svg width="17" height="13" viewBox="0 0 17 13" fill="none" stroke="#fff" className="mr-[10px]" aria-hidden="true"><path d="M5 3.500h9.500v7H4M16 5.500v3M1.500.5v2M4.500.5v2M.5 2.500h5v2l-1.500 1.500h-1L.5 4.500zM3 6v5" /><path d="M6.500 5h5v4h-5z" fill="#fff" stroke="none" /></svg>
        <svg width="13" height="13" viewBox="0 0 13 13" fill="none" stroke="#bbb" strokeWidth="1.2" className="mr-[9px]" aria-hidden="true"><path d="M1 12C1 6 6 1 12 1M4 12c0-4 4-8 8-8M7 12c0-2.500 2.500-5 5-5" /><circle cx="11" cy="11" r="1.5" fill="#fff" stroke="none" /></svg>
        <svg width="16" height="12" viewBox="0 0 16 12" fill="none" stroke="#fff" className="mr-[10px]" aria-hidden="true"><path d="M.5 4h2.500l3-3v10l-3-3H.5zM8 4.500c1 1 1 2 0 3M10 2.500c2 2 2 5 0 7" /><path d="M12.500 1c3 3 3 7 0 10" stroke="#777" /></svg>
        <span className="mr-3 text-[11px]">ENG</span>
        <Clock />
        <button type="button" aria-label="Notifications" className="relative mr-3 ml-[15px] h-6 w-6">
          <svg width="17" height="17" viewBox="0 0 17 17" aria-hidden="true"><path d="M1 1h16v13h-7l-4 3v-3H1z" fill="#fff" /><path d="M4 4.500h10M4 7.500h10M4 10.500h7" stroke="#111" /></svg>
          <span className="absolute right-0 bottom-0 h-4 w-4 rounded-full border border-[#888] bg-[#333] text-center text-[10px] leading-[14px] font-bold">9</span>
        </button>
        <span className="mr-1 h-10 w-px bg-[#666]" />
      </div>
    </footer>
  );
}

function SecondScreen() {
  const apps = [
    ["Chrome", <Chrome />, 1], ["Download manager", <Idm />, 0], ["VS Code", <VsCode />, 0], ["Visual Studio", <VisualStudio />, 0],
    ["SQL tools", <Ssms />, 0], ["Telegram", <Telegram />, 1], ["Remote app", <RedApp />, 0], ["Media Player", <Wmp />, 0],
    ["Explorer", <Explorer />, 1], ["VLC", <Vlc />, 1], ["MofidTrader", <Mofid />, 2],
  ];
  return (
    <div className="flex h-screen w-3/7 flex-col bg-black">
      <div className="flex h-5/6 flex-col justify-end">
        <footer className="flex h-10 items-center bg-[#0a0a0a] text-white">
          <Pin label="Start" w="w-12"><WinLogo /></Pin>
          <Pin label="Search" w="w-12"><span className="h-4 w-4 rounded-full border-2 border-white" /></Pin>
          <Pin label="Task view" w="w-12"><TaskView /></Pin>
          <div className="flex gap-px pl-[3px]">
            {apps.map(([label, icon, state]) => (
              <button type="button" key={label} aria-label={label} className={state === 2 ? "flex h-10 w-12 flex-col items-center bg-[#3a3a3a]" : "flex h-10 w-12 flex-col items-center"}>
                <span className="flex h-[38px] items-center">{icon}</span>
                <span className={state === 2 ? "h-0.5 w-12 bg-[#76b9ed]" : state === 1 ? "h-0.5 w-10 bg-[#76b9ed]" : "h-0.5 w-10"} />
              </button>
            ))}
          </div>
          <div className="ml-auto pr-1"><Clock /></div>
        </footer>
      </div>
    </div>
  );
}

export default function App() {
  return (
    <div className={`flex min-h-screen bg-black ${UI}`}>
      <div className="relative flex h-screen w-4/7 flex-col bg-[#f0f0f0]">
        <TopBars />
        <div className="flex min-h-0 flex-1">
          <LeftPanels />
          <ChartArea />
        </div>
        <section className="flex h-[198px] shrink-0 border-b border-[#999] pt-1 pr-[3px] pb-[3px]">
          <div className="flex w-[15px] flex-col items-center gap-1 pt-0.5">
            <button type="button" aria-label="Close Strategy Tester"><CloseX /></button>
            <h2 className="flex w-3 flex-1 rotate-180 items-center bg-linear-to-b from-[#b8c8dc] to-[#d6e4f2] pt-0.5 text-[11px] leading-3 text-black [writing-mode:vertical-rl]">Strategy Tester</h2>
          </div>
          <div className="flex-1 border-t border-l border-[#999] bg-white" />
        </section>
        <StatusBar />
        <Taskbar />
        <div className="absolute inset-x-0 top-[250px] flex justify-center">
          <Dialog />
        </div>
      </div>
      <SecondScreen />
    </div>
  );
}
